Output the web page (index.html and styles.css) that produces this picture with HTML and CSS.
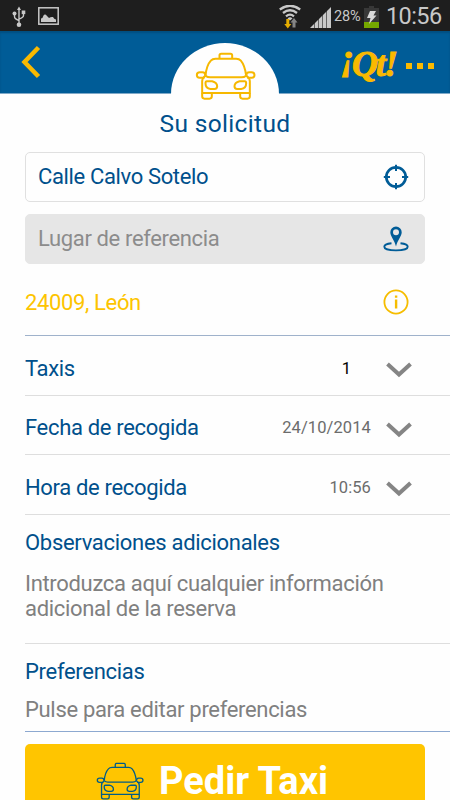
FILE: index.html
```html
<!DOCTYPE html>
<html lang="es">

<head>
    <meta charset="UTF-8">
    <meta name="viewport" content="width=device-width, initial-scale=1.0">
    <title>iQt! - Su solicitud</title>
    <link rel="stylesheet" href="styles.css">
</head>

<body>

    <!-- Taxi icon, used in the header and in the button -->
    <svg class="sprite" width="0" height="0">
        <symbol id="taxi" viewBox="105 50 182 144">
            <path d="M178 69V60q0-5 5-5h28q5 0 5 5v9" />
            <path d="M136 121Q139 90 152 76Q157 70 166 70H228Q237 70 242 76Q254 90 258 121" />
            <path d="M136 121Q142 126 150 126H244Q252 126 258 121" />
            <path d="M136 121Q126 128 126 138V173H269V138Q269 128 258 121" />
            <path d="M133 127H118Q110 127 110 119Q110 111 119 111H127Q135 111 136 121" />
            <path d="M261 127H275Q283 127 283 119Q283 111 274 111H267Q259 111 258 121" />
            <path d="M126 173v10q0 7 7 7h15q7 0 7-7v-10M240 173v10q0 7 7 7h15q7 0 7-7v-10" />
            <path d="M140 138H156Q171 142 171 153Q171 161 163 161H151Q136 160 136 144Q136 138 140 138Z" />
            <path d="M254 138H238Q223 142 223 153Q223 161 231 161H243Q258 160 258 144Q258 138 254 138Z" />
        </symbol>
    </svg>

    <div class="status-bar">
        <div class="status-left">
            <svg width="14" height="22" viewBox="0 0 14 22" fill="none" stroke="#c8c8c8" stroke-width="1.4">
                <path d="M7 3V19M2.5 8V10.5Q2.5 13 7 14.5M11.5 6V9.5Q11.5 11.5 7 13" />
                <path d="M7 0.5L9 4H5Z" fill="#c8c8c8" stroke="none" />
                <circle cx="2.5" cy="7.5" r="2" fill="#c8c8c8" stroke="none" />
                <rect x="9.7" y="4.5" width="3.6" height="3.6" fill="#c8c8c8" stroke="none" />
                <circle cx="7" cy="18.8" r="2.3" fill="#c8c8c8" stroke="none" />
            </svg>
            <svg width="21" height="18" viewBox="0 0 21 18">
                <rect x="0.8" y="0.8" width="19.4" height="16.4" fill="none" stroke="#c8c8c8" stroke-width="1.5" />
                <path d="M3 15V11.5Q5 11 5.5 8.5Q7 6.5 9 9L11 11Q13 9.5 15 10Q16 12 18 12.5V15Z" fill="#c8c8c8" />
            </svg>
        </div>
        <div class="status-right">
            <svg class="wifi" width="22" height="24" viewBox="0 0 22 24" fill="none" stroke="#c8c8c8">
                <path d="M0.8 4.5Q11 -3 21.2 4.5M4 8Q11 2.5 18 8M7 11.3Q11 8 15 11.3" stroke-width="2.3" />
                <path d="M8.5 13.5Q11 11 13.5 13.5L11 15.5Z" fill="#c8c8c8" stroke="none" />
                <path d="M7.3 14h3v5h2l-3.5 4.5L5.3 19h2Z" fill="#e6ae00" stroke="none" />
                <path d="M13.5 22.5v-5h-2l3.5-4.5 3.5 4.5h-2v5Z" fill="#858585" stroke="none" />
            </svg>
            <svg class="signal" width="21" height="21" viewBox="0 0 21 21">
                <path d="M0 21L21 0V21Z" fill="#c8c8c8" />
                <path d="M4.5 14V21M8.5 10V21M12.5 6V21M16.5 2V21" stroke="#1e1e1e" stroke-width="0.6" />
            </svg>
            <span class="percent">28%</span>
            <svg class="battery" width="15" height="22" viewBox="0 0 15 22">
                <path d="M5 0H10V2H15V22H0V2H5Z" fill="#383838" />
                <rect y="16" width="15" height="6" fill="#75a800" />
                <path d="M6 5H12L9.5 9.5H12.5L5 18L6.5 12H3Z" fill="#d8d8d8" />
            </svg>
            <span class="clock">10:56</span>
        </div>
    </div>

    <div class="header">
        <svg class="back" width="20" height="34" viewBox="0 0 20 34" fill="none" stroke="#fab900" stroke-width="4.5">
            <path d="M17.5 2.5L3.5 17L17.5 31.5" />
        </svg>
        <div class="badge">
            <svg class="taxi" width="61" height="48"><use href="#taxi" /></svg>
        </div>
        <div class="brand">
            <span class="logo"><span class="raised">¡</span>Qt!</span>
            <div class="dots"><i></i><i></i><i></i></div>
        </div>
    </div>

    <div class="content">
        <h1>Su solicitud</h1>

        <div class="field">
            <span>Calle Calvo Sotelo</span>
            <svg width="26" height="26" viewBox="0 0 26 26" fill="none" stroke="#005c97">
                <circle cx="13" cy="13" r="9.7" stroke-width="2.7" />
                <path d="M13 0.8V7M13 19V25.2M0.8 13H7M19 13H25.2" stroke-width="2" />
            </svg>
        </div>

        <div class="field disabled">
            <span>Lugar de referencia</span>
            <svg width="26" height="26" viewBox="0 0 26 26" fill="none" stroke="#005c97">
                <path d="M8.5 17.3C4 17.8 1.3 19 1.3 20.7C1.3 23 6.5 24.4 13 24.4S24.7 23 24.7 20.7C24.7 19 22 17.8 17.5 17.3" stroke-width="1.9" />
                <path fill-rule="evenodd" d="M13 0.5A5.7 5.7 0 0 1 18.7 6.2C18.7 10 14.5 14 13 20.5C11.5 14 7.3 10 7.3 6.2A5.7 5.7 0 0 1 13 0.5ZM13 3.2A3 3 0 1 0 13 9.2A3 3 0 1 0 13 3.2Z" fill="#005c97" stroke="none" />
            </svg>
        </div>

        <div class="postal">
            <span>24009, León</span>
            <svg width="26" height="26" viewBox="0 0 26 26">
                <circle cx="13" cy="13" r="11.6" fill="none" stroke="#f6bd00" stroke-width="1.8" />
                <path d="M11.9 6.5h2.4v2.3h-2.4ZM11.9 10.5h2.4v9h-2.4Z" fill="#f6bd00" />
            </svg>
        </div>

        <div class="row">
            <span class="label">Taxis</span>
            <span class="value count">1</span>
            <svg class="arrow" width="26" height="16" viewBox="0 0 26 16"><path d="M1.5 2L13 12.5L24.5 2" /></svg>
        </div>
        <div class="row">
            <span class="label">Fecha de recogida</span>
            <span class="value">24/10/2014</span>
            <svg class="arrow" width="26" height="16" viewBox="0 0 26 16"><path d="M1.5 2L13 12.5L24.5 2" /></svg>
        </div>
        <div class="row">
            <span class="label">Hora de recogida</span>
            <span class="value">10:56</span>
            <svg class="arrow" width="26" height="16" viewBox="0 0 26 16"><path d="M1.5 2L13 12.5L24.5 2" /></svg>
        </div>

        <div class="notes">
            <h2>Observaciones adicionales</h2>
            <p>Introduzca aquí cualquier información<br>adicional de la reserva</p>
        </div>

        <div class="preferences">
            <h2>Preferencias</h2>
            <p>Pulse para editar preferencias</p>
        </div>

        <button class="order">
            <svg class="taxi" width="48" height="38"><use href="#taxi" /></svg>
            <span>Pedir Taxi</span>
        </button>
    </div>

</body>

</html>
```
FILE: styles.css
```css
* {
    box-sizing: border-box;
}

body {
    margin: 0;
    height: 800px;
    overflow: hidden;
    background: #fefefe;
    font-family: Roboto, sans-serif;
    font-size: 22px;
    color: #00508c;
}

svg {
    display: block;
    flex-shrink: 0;
}

.sprite {
    position: absolute;
}

.status-bar {
    display: flex;
    justify-content: space-between;
    height: 31px;
    padding: 0 9px 0 12px;
    background: #1e1e1e;
    color: #c8c8c8;
}

.status-left {
    display: flex;
    align-items: flex-start;
    gap: 12px;
    padding-top: 6px;
}

.status-left svg + svg {
    margin-top: 1px;
}

.status-right {
    display: flex;
    align-items: flex-start;
    padding-top: 5px;
}

.signal {
    margin: 2px 3px 0 9px;
}

.percent {
    width: 28px;
    font-size: 14.5px;
    line-height: 24px;
    letter-spacing: -0.2px;
    white-space: nowrap;
}

.battery {
    margin: 1px 7px 0 2px;
}

.clock {
    width: 55px;
    font-size: 23.5px;
    line-height: 22px;
    letter-spacing: -0.6px;
    white-space: nowrap;
}

.header {
    display: grid;
    grid-template-columns: 1fr 108px 1fr;
    height: 63px;
    background: #005c97;
    border-bottom: 1px solid #7fa9c8;
    box-shadow: inset 0 2px 2px rgba(0, 0, 0, 0.15);
}

.back {
    margin: 14px 0 0 21px;
}

.badge {
    display: flex;
    justify-content: center;
    height: 51px;
    margin-top: 12px;
    padding-top: 9px;
    border-radius: 54px 54px 0 0 / 51px 51px 0 0;
    background: #fefefe;
}

.taxi {
    fill: none;
    stroke: #f6b800;
    stroke-width: 6;
    stroke-linejoin: round;
    overflow: visible;
}

.brand {
    display: flex;
    justify-content: flex-end;
    align-items: flex-start;
    padding-right: 16px;
    color: #fab900;
}

.logo {
    width: 55px;
    margin: 14px 10px 0 0;
    font-family: "Liberation Serif", serif;
    font-size: 36px;
    line-height: 38px;
    font-weight: bold;
    font-style: italic;
    letter-spacing: -2px;
    white-space: nowrap;
    -webkit-text-stroke: 1px #fab900;
}

.raised {
    margin-right: -1px;
    line-height: 0;
    vertical-align: 7px;
}

.dots {
    display: flex;
    gap: 5px;
    margin-top: 32px;
}

.dots i {
    width: 6px;
    height: 6px;
    background: #fab900;
}

.content {
    padding-left: 25px;
}

h1 {
    margin: 0 25px 0 0;
    height: 58px;
    font-size: 24.5px;
    line-height: 60px;
    font-weight: normal;
    letter-spacing: 0.35px;
    text-align: center;
}

.field {
    display: flex;
    justify-content: space-between;
    align-items: center;
    width: 400px;
    height: 50px;
    margin-bottom: 12px;
    padding: 0 15px 2px 12px;
    border: 1px solid #e0e0e0;
    border-radius: 5px;
    letter-spacing: -0.36px;
}

.field svg {
    margin-top: 2px;
}

.field.disabled {
    background: #e6e6e6;
    border-color: #e6e6e6;
    color: #8c8c8c;
    margin-bottom: 0;
}

.postal {
    display: flex;
    justify-content: space-between;
    align-items: center;
    height: 72px;
    padding: 5px 41px 0 0;
    border-bottom: 1px solid #9fb2cb;
    color: #fdc400;
    letter-spacing: -0.36px;
}

.row {
    display: flex;
    align-items: center;
    height: 59.4px;
    padding: 5px 38px 0 0;
    border-bottom: 1px solid #dedede;
}

.postal + .row {
    height: 60px;
}

.label {
    letter-spacing: -0.33px;
}

.value {
    margin: 0 15px 0 auto;
    font-size: 16.5px;
    letter-spacing: 0.1px;
    color: #6c6c6c;
}

.count {
    margin-right: 35px;
    color: #000000;
}

.arrow {
    margin-top: 4px;
    fill: none;
    stroke: #858585;
    stroke-width: 4;
}

h2 {
    margin: 0;
    font-size: 22px;
    line-height: 26px;
    font-weight: normal;
    letter-spacing: -0.3px;
}

p {
    margin: 0;
    line-height: 25px;
    letter-spacing: -0.32px;
    color: #808080;
}

.notes {
    height: 129px;
    padding-top: 15px;
    border-bottom: 1px solid #dedede;
}

.notes p {
    padding-top: 15px;
}

.preferences {
    height: 88px;
    padding-top: 15px;
    border-bottom: 1px solid #8ca8d0;
}

.preferences p {
    padding-top: 12px;
}

.order {
    display: flex;
    align-items: center;
    gap: 15px;
    width: 400px;
    height: 75px;
    margin-top: 12px;
    padding: 0 0 0 71px;
    border: none;
    border-radius: 5px;
    background: #ffc500;
    color: #ffffff;
    font-family: Roboto, sans-serif;
    font-size: 38px;
    line-height: 34px;
    font-weight: bold;
}

.order .taxi {
    stroke: #005c87;
    stroke-width: 5;
}
```
